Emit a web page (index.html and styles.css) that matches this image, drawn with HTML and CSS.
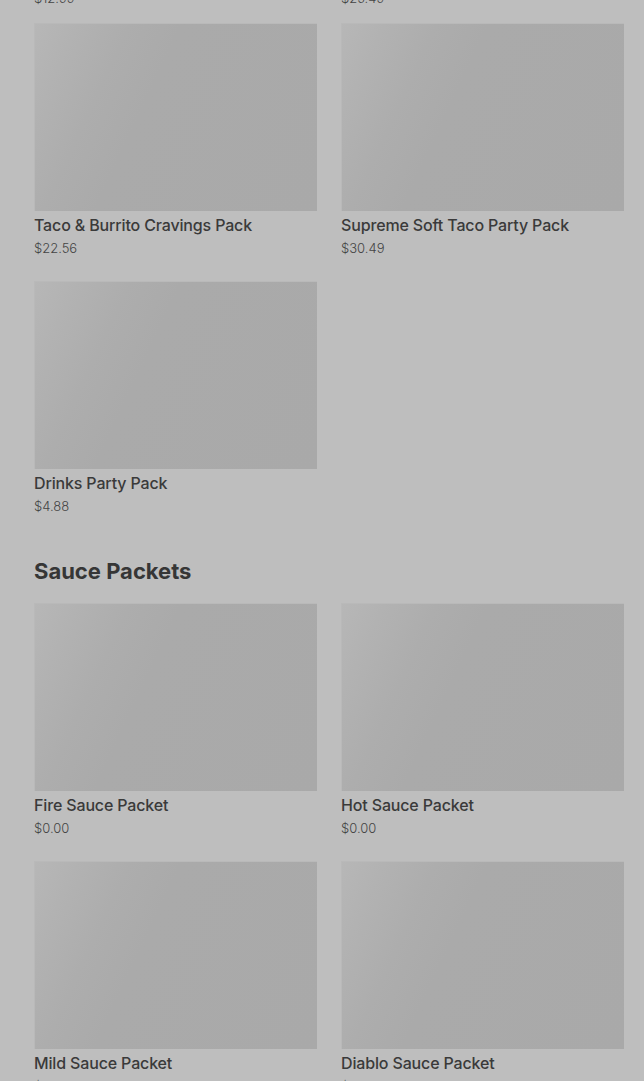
FILE: index.html
```html
<!DOCTYPE html>
<html lang="en">
<head>
<meta charset="utf-8">
<title>Menu</title>
<link rel="stylesheet" href="styles.css">
</head>
<body>
<main class="page">
  <div class="grid prev-row">
    <p class="price">$12.99</p>
    <p class="price">$25.49</p>
  </div>

  <section class="section">
    <div class="grid">
      <article class="card">
        <div class="thumb"></div>
        <h3 class="title">Taco &amp; Burrito Cravings Pack</h3>
        <p class="price">$22.56</p>
      </article>
      <article class="card">
        <div class="thumb"></div>
        <h3 class="title">Supreme Soft Taco Party Pack</h3>
        <p class="price">$30.49</p>
      </article>
      <article class="card">
        <div class="thumb"></div>
        <h3 class="title">Drinks Party Pack</h3>
        <p class="price">$4.88</p>
      </article>
    </div>
  </section>

  <section class="section">
    <h2 class="section-title">Sauce Packets</h2>
    <div class="grid">
      <article class="card">
        <div class="thumb"></div>
        <h3 class="title">Fire Sauce Packet</h3>
        <p class="price">$0.00</p>
      </article>
      <article class="card">
        <div class="thumb"></div>
        <h3 class="title">Hot Sauce Packet</h3>
        <p class="price">$0.00</p>
      </article>
      <article class="card">
        <div class="thumb"></div>
        <h3 class="title">Mild Sauce Packet</h3>
        <p class="price">$0.00</p>
      </article>
      <article class="card">
        <div class="thumb"></div>
        <h3 class="title">Diablo Sauce Packet</h3>
        <p class="price">$0.00</p>
      </article>
    </div>
  </section>
</main>
</body>
</html>
```
FILE: styles.css
```css
html, body {
  margin: 0;
  padding: 0;
  background: #bebebe;
  height: 100%;
  overflow: hidden;
}

body {
  font-family: Inter, "Noto Sans", "Liberation Sans", sans-serif;
  color: #333333;
}

.page {
  padding: 0 20px 0 34px;
}

.grid {
  display: grid;
  grid-template-columns: 283px 283px;
  column-gap: 24px;
  row-gap: 24px;
}

.prev-row {
  margin-top: -11px;
  margin-bottom: 16px;
}

.card {
  display: flex;
  flex-direction: column;
}

.thumb {
  height: 188px;
  background: linear-gradient(115deg, #b7b7b7 0%, #b2b2b2 12%, #adadad 26%, #aaaaaa 40%, #a9a9a9 100%);
  box-shadow: inset 1px 1px 0 #b9b9b9;
}

.title {
  margin: 4px 0 0;
  font-size: 16px;
  line-height: 20px;
  font-weight: 500;
  color: #3a3a3a;
  letter-spacing: -0.15px;
}

.price {
  margin: 4px 0 0;
  font-size: 13px;
  line-height: 18px;
  font-weight: 300;
  color: #444444;
}

.prev-row .price {
  margin: 0;
}

.section-title {
  margin: 42px 0 18px;
  font-size: 22px;
  line-height: 28px;
  font-weight: 700;
  color: #363636;
  letter-spacing: 0;
}
```
